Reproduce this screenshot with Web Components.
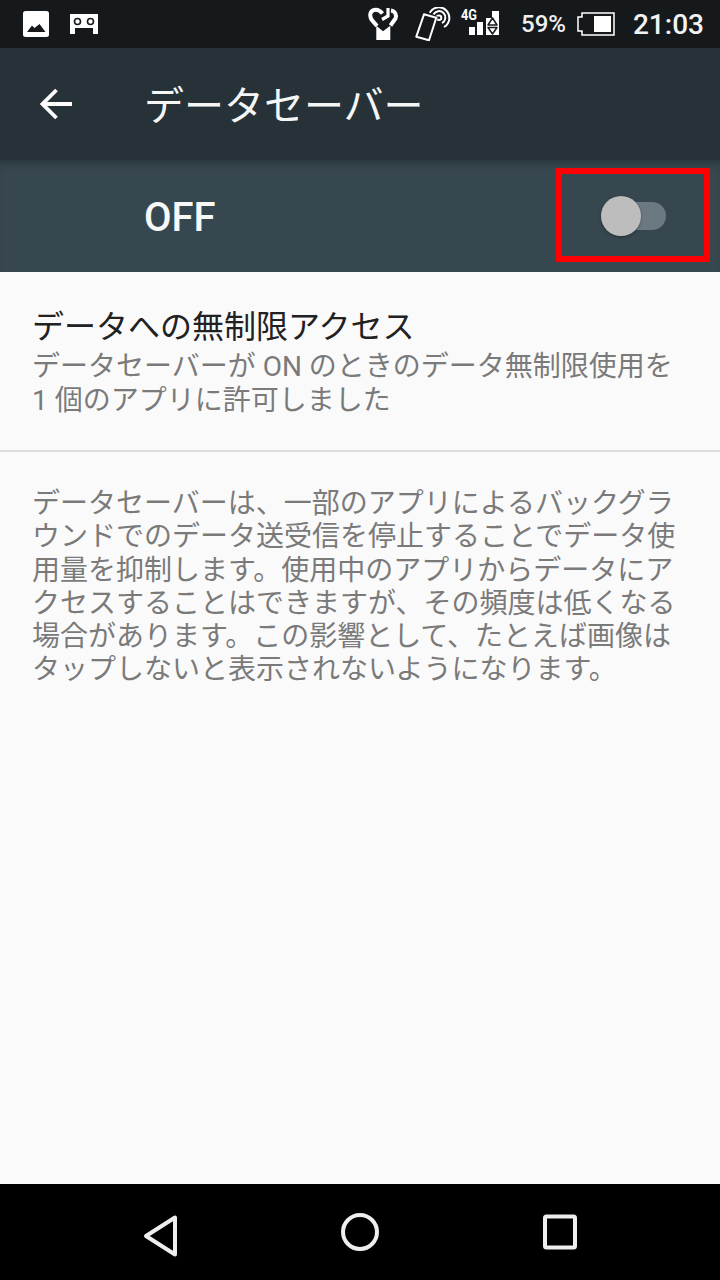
<!DOCTYPE html>
<html lang="ja">
<head>
<meta charset="utf-8">
<style>
  html, body { margin: 0; padding: 0; }
  body { width: 720px; height: 1280px; font-family: Roboto, "Noto Sans CJK JP", sans-serif; }
</style>
</head>
<body>
<settings-screen>
  <status-bar slot="status"></status-bar>
  <app-bar slot="bar" title="データセーバー"></app-bar>
  <switch-bar slot="bar2" label="OFF"></switch-bar>
  <pref-row slot="body" heading="データへの無制限アクセス">データセーバーが ON のときのデータ無制限使用を<br>1 個のアプリに許可しました</pref-row>
  <foot-note slot="body">データセーバーは、一部のアプリによるバックグラウンドでのデータ送受信を停止することでデータ使用量を抑制します。使用中のアプリからデータにアクセスすることはできますが、その頻度は低くなる場合があります。この影響として、たとえば画像はタップしないと表示されないようになります。</foot-note>
  <nav-bar slot="nav"></nav-bar>
</settings-screen>

<script>
class SettingsScreen extends HTMLElement {
    constructor() {
        super();
        this.attachShadow({mode: "open"}).innerHTML = `
        <style>
            :host { display: flex; flex-direction: column; width: 720px; height: 1280px; background: #fafafa; overflow: hidden; }
            main { flex: 1; }
        </style>
        <slot name="status"></slot>
        <slot name="bar"></slot>
        <slot name="bar2"></slot>
        <main><slot name="body"></slot></main>
        <slot name="nav"></slot>`;
    }
}

class StatusBar extends HTMLElement {
    constructor() {
        super();
        this.attachShadow({mode: "open"}).innerHTML = `
        <style>
            :host { display: flex; align-items: center; height: 48px; background: #15191c; color: #fff; font-family: Roboto, sans-serif; }
            svg { display: block; flex: none; }
            .left { display: flex; align-items: center; gap: 21px; margin-left: 23px; }
            .right { display: flex; align-items: center; margin-left: auto; }
            .pct { font-size: 24px; font-weight: 500; margin-left: 21px; color: #eee; }
            .time { font-size: 28px; font-weight: 500; margin-left: 18px; margin-right: 16px; color: #f2f2f2; }
        </style>
        <div class="left">
            <svg width="26" height="26" viewBox="0 0 26 26"><rect width="26" height="26" rx="2.500" fill="#fff"/><path d="M4 21l5-6.500 2.500 2.500 5-4 6 8z" fill="#15191c"/></svg>
            <svg width="28" height="20" viewBox="0 0 28 20"><path d="M0 0h28v20h-5v-6H5v6H0z" fill="#fff"/><circle cx="7.500" cy="7.500" r="3" fill="#fff" stroke="#15191c" stroke-width="1.600"/><circle cx="20.500" cy="7.500" r="3" fill="#fff" stroke="#15191c" stroke-width="1.600"/></svg>
        </div>
        <div class="right">
            <svg width="32" height="34" viewBox="0 0 32 34">
                <g fill="none" stroke="#fff" stroke-width="4">
                    <path d="M10 19L4.500 12.500C2 8 3.500 4 7 3C10 2 13 3.500 15.500 6.500"/>
                    <path d="M24 3.500C28 4 30 8 28.500 11.500L23.500 18.500"/>
                </g>
                <path d="M21 1V9L15 12.500" fill="none" stroke="#fff" stroke-width="3.200"/>
                <path d="M9.300 18.700L16 24.300L23.300 18.700V33H9.300z" fill="#fff"/>
            </svg>
            <svg style="margin-left:16px" width="36" height="34" viewBox="0 0 36 34">
                <g fill="none" stroke="#fff" stroke-width="2">
                    <path d="M14.700 5.700A10.500 10.500 0 1 1 29 20"/>
                    <path d="M18.500 7.500A6.300 6.300 0 1 1 27 16"/>
                    <circle cx="24" cy="10.700" r="2.300"/>
                </g>
                <path d="M9 7.300L21.300 10.700L14 33.300L1.300 29.700z" fill="#15191c" stroke="#15191c" stroke-width="3"/>
                <path d="M9 7.300L21.300 10.700L14 33.300L1.300 29.700z" fill="#15191c" stroke="#fff" stroke-width="2" stroke-linejoin="round"/>
            </svg>
            <svg style="margin-left:8px" width="41" height="34" viewBox="0 0 41 34">
                <rect x="10" y="20" width="6" height="8" fill="#fff"/>
                <rect x="18" y="15" width="6" height="13" fill="#fff"/>
                <path d="M27 11H33V4H40V28H27z" fill="#fff"/>
                <path d="M33.500 11L38 18H29z" fill="#fff" stroke="#15191c" stroke-width="1.500" stroke-linejoin="round"/>
                <path d="M33.500 27L38 20.500H29z" fill="#fff" stroke="#15191c" stroke-width="1.500" stroke-linejoin="round"/>
                <text x="2" y="13" font-family="Roboto, sans-serif" font-size="14" font-weight="700" fill="#fff" textLength="16" lengthAdjust="spacingAndGlyphs">4G</text>
            </svg>
            <span class="pct">59%</span>
            <svg style="margin-left:11px" width="38" height="24" viewBox="0 0 38 24"><path d="M5 1h32v22H5v-4H1V5h4z" fill="none" stroke="#fff" stroke-width="1.500"/><rect x="17" y="4" width="17" height="16" fill="#fff"/></svg>
            <span class="time">21:03</span>
        </div>`;
    }
}

class AppBar extends HTMLElement {
    constructor() {
        super();
        this.attachShadow({mode: "open"});
    }
    connectedCallback() {
        this.shadowRoot.innerHTML = `
        <style>
            :host { display: flex; align-items: center; height: 112px; background: #263238; color: #fff; }
            svg { display: block; margin-left: 40px; }
            h1 { margin: -2px 0 0 71px; font: 400 40px "Noto Sans CJK JP", sans-serif; color: #f5f6f6; }
        </style>
        <svg width="33" height="32" viewBox="0 0 33 32"><path d="M32 16H3M16.500 2L2.500 16l14 14" fill="none" stroke="#fff" stroke-width="3.800"/></svg>
        <h1>${this.getAttribute("title")}</h1>`;
    }
}

class SwitchBar extends HTMLElement {
    constructor() {
        super();
        this.attachShadow({mode: "open"});
    }
    connectedCallback() {
        this.shadowRoot.innerHTML = `
        <style>
            :host { display: flex; align-items: center; height: 112px; background: #37474f; color: #fff; padding-left: 144px; padding-right: 10px; box-sizing: border-box; box-shadow: inset 0 8px 8px -6px rgba(0,0,0,.3); }
            span { font: 500 40px Roboto, sans-serif; color: #f7f8f8; margin-top: 2px; }
            .outline { align-self: flex-start; margin-left: auto; margin-top: 8px; width: 154px; height: 94px; box-sizing: border-box; border: 6px solid #f00; display: flex; align-items: center; justify-content: center; }
            .track { position: relative; width: 62px; height: 28px; border-radius: 14px; background: #6b7a81; margin-left: 4px; margin-top: 2px; }
            .thumb { position: absolute; left: -3px; top: -6px; width: 40px; height: 40px; border-radius: 50%; background: #bdbdbd; box-shadow: 0 1px 3px rgba(0,0,0,.35); }
        </style>
        <span>${this.getAttribute("label")}</span>
        <div class="outline"><div class="track"><div class="thumb"></div></div></div>`;
    }
}

class PrefRow extends HTMLElement {
    constructor() {
        super();
        this.attachShadow({mode: "open"});
    }
    connectedCallback() {
        this.shadowRoot.innerHTML = `
        <style>
            :host { display: block; height: 180px; box-sizing: border-box; padding: 30px 32px 0; border-bottom: 2px solid #dcdcdc; font-family: "Noto Sans CJK JP", sans-serif; }
            h2 { margin: 0; font-size: 32px; font-weight: 400; line-height: 44px; color: #212121; }
            p { margin: 4px 0 0; font-size: 28px; line-height: 33.500px; color: #7a7a7a; font-family: Roboto, "Noto Sans CJK JP", sans-serif; }
        </style>
        <h2>${this.getAttribute("heading")}</h2>
        <p><slot></slot></p>`;
    }
}

class FootNote extends HTMLElement {
    constructor() {
        super();
        this.attachShadow({mode: "open"}).innerHTML = `
        <style>
            :host { display: block; padding: 33px 32px 0; font: 400 28px/33.300px "Noto Sans CJK JP", sans-serif; color: #7a7a7a; }
        </style>
        <slot></slot>`;
    }
}

class NavBar extends HTMLElement {
    constructor() {
        super();
        this.attachShadow({mode: "open"}).innerHTML = `
        <style>
            :host { display: flex; align-items: center; justify-content: center; height: 96px; background: #000; }
            svg { display: block; }
        </style>
        <svg width="720" height="96" viewBox="0 0 720 96">
            <g fill="none" stroke="#eee" stroke-width="4" stroke-linejoin="round">
                <path d="M175 33.500v37L146 52z"/>
                <circle cx="360" cy="48" r="17"/>
                <rect x="545" y="32.500" width="30" height="31" rx="1.500"/>
            </g>
        </svg>`;
    }
}

customElements.define("settings-screen", SettingsScreen);
customElements.define("status-bar", StatusBar);
customElements.define("app-bar", AppBar);
customElements.define("switch-bar", SwitchBar);
customElements.define("pref-row", PrefRow);
customElements.define("foot-note", FootNote);
customElements.define("nav-bar", NavBar);
</script>
</body>
</html>
